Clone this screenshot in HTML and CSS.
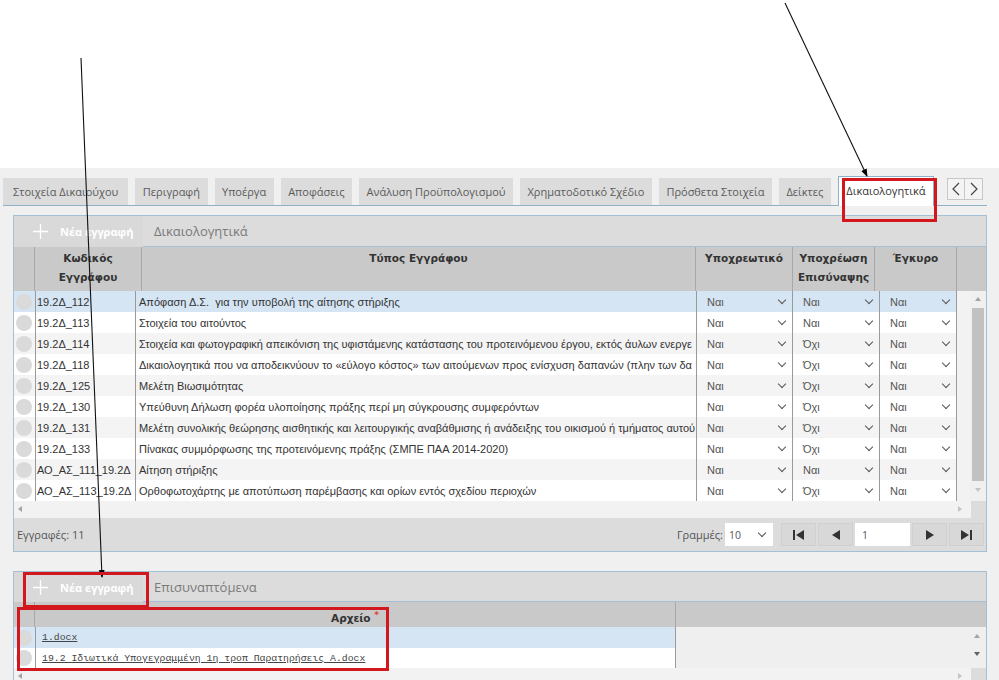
FILE: index.html
```html
<!DOCTYPE html>
<html lang="el">
<head>
<meta charset="utf-8">
<title>Δικαιολογητικά</title>
<link rel="stylesheet" href="styles.css">
</head>
<body>
<div class="top-space"></div>
<div class="app">
  <div class="tabs">
    <div class="tab">Στοιχεία Δικαιούχου</div>
    <div class="tab">Περιγραφή</div>
    <div class="tab">Υποέργα</div>
    <div class="tab">Αποφάσεις</div>
    <div class="tab">Ανάλυση Προϋπολογισμού</div>
    <div class="tab">Χρηματοδοτικό Σχέδιο</div>
    <div class="tab">Πρόσθετα Στοιχεία</div>
    <div class="tab">Δείκτες</div>
    <div class="tab active">Δικαιολογητικά</div>
    <div class="tab-nav">
      <span class="nav-btn"><svg width="8" height="14" viewBox="0 0 8 14"><path d="M7 1 L1 7 L7 13" fill="none" stroke="#444" stroke-width="1.2"/></svg></span>
      <span class="nav-btn"><svg width="8" height="14" viewBox="0 0 8 14"><path d="M1 1 L7 7 L1 13" fill="none" stroke="#444" stroke-width="1.2"/></svg></span>
    </div>
  </div>

  <div class="panel panel-docs">
    <div class="toolbar">
      <div class="new-btn"><svg class="plus" width="15" height="15" viewBox="0 0 15 15"><path d="M7.5 0 V15 M0 7.5 H15" stroke="#fff" stroke-width="1.3"/></svg><span>Νέα εγγραφή</span></div>
      <div class="tb-title">Δικαιολογητικά</div>
    </div>
    <div class="ghead">
      <div class="hc"></div>
      <div class="hc">Κωδικός<br>Εγγράφου</div>
      <div class="hc">Τύπος Εγγράφου</div>
      <div class="hc">Υποχρεωτικό</div>
      <div class="hc">Υποχρέωση<br>Επισύναψης</div>
      <div class="hc">Έγκυρο</div>
      <div class="hc last"></div>
    </div>
    <div class="gbody">
      <div class="rows">
        <div class="row sel"><div class="c chk"><span class="radio"></span></div><div class="c code">19.2Δ_112</div><div class="c type">Απόφαση Δ.Σ.&nbsp; για την υποβολή της αίτησης στήριξης</div><div class="c dd">Ναι<i></i></div><div class="c dd">Ναι<i></i></div><div class="c dd">Ναι<i></i></div></div>
        <div class="row"><div class="c chk"><span class="radio"></span></div><div class="c code">19.2Δ_113</div><div class="c type">Στοιχεία του αιτούντος</div><div class="c dd">Ναι<i></i></div><div class="c dd">Ναι<i></i></div><div class="c dd">Ναι<i></i></div></div>
        <div class="row alt"><div class="c chk"><span class="radio"></span></div><div class="c code">19.2Δ_114</div><div class="c type">Στοιχεία και φωτογραφική απεικόνιση της υφιστάμενης κατάστασης του προτεινόμενου έργου, εκτός άυλων ενεργε</div><div class="c dd">Ναι<i></i></div><div class="c dd">Όχι<i></i></div><div class="c dd">Ναι<i></i></div></div>
        <div class="row"><div class="c chk"><span class="radio"></span></div><div class="c code">19.2Δ_118</div><div class="c type">Δικαιολογητικά που να αποδεικνύουν το «εύλογο κόστος» των αιτούμενων προς ενίσχυση δαπανών (πλην των δα</div><div class="c dd">Ναι<i></i></div><div class="c dd">Όχι<i></i></div><div class="c dd">Ναι<i></i></div></div>
        <div class="row alt"><div class="c chk"><span class="radio"></span></div><div class="c code">19.2Δ_125</div><div class="c type">Μελέτη Βιωσιμότητας</div><div class="c dd">Ναι<i></i></div><div class="c dd">Όχι<i></i></div><div class="c dd">Ναι<i></i></div></div>
        <div class="row"><div class="c chk"><span class="radio"></span></div><div class="c code">19.2Δ_130</div><div class="c type">Υπεύθυνη Δήλωση φορέα υλοποίησης πράξης περί μη σύγκρουσης συμφερόντων</div><div class="c dd">Ναι<i></i></div><div class="c dd">Όχι<i></i></div><div class="c dd">Ναι<i></i></div></div>
        <div class="row alt"><div class="c chk"><span class="radio"></span></div><div class="c code">19.2Δ_131</div><div class="c type">Μελέτη συνολικής θεώρησης αισθητικής και λειτουργικής αναβάθμισης ή ανάδειξης του οικισμού ή τμήματος αυτού</div><div class="c dd">Ναι<i></i></div><div class="c dd">Όχι<i></i></div><div class="c dd">Ναι<i></i></div></div>
        <div class="row"><div class="c chk"><span class="radio"></span></div><div class="c code">19.2Δ_133</div><div class="c type">Πίνακας συμμόρφωσης της προτεινόμενης πράξης (ΣΜΠΕ ΠΑΑ 2014-2020)</div><div class="c dd">Ναι<i></i></div><div class="c dd">Όχι<i></i></div><div class="c dd">Ναι<i></i></div></div>
        <div class="row alt"><div class="c chk"><span class="radio"></span></div><div class="c code">ΑΟ_ΑΣ_111_19.2Δ</div><div class="c type">Αίτηση στήριξης</div><div class="c dd">Ναι<i></i></div><div class="c dd">Ναι<i></i></div><div class="c dd">Ναι<i></i></div></div>
        <div class="row"><div class="c chk"><span class="radio"></span></div><div class="c code">ΑΟ_ΑΣ_113_19.2Δ</div><div class="c type">Ορθοφωτοχάρτης με αποτύπωση παρέμβασης και ορίων εντός σχεδίου περιοχών</div><div class="c dd">Ναι<i></i></div><div class="c dd">Όχι<i></i></div><div class="c dd">Ναι<i></i></div></div>
      </div>
      <div class="gutter"></div>
      <div class="vscroll">
        <span class="arr up"></span>
        <span class="thumb"></span>
        <span class="arr down"></span>
      </div>
    </div>
    <div class="hscroll">
      <span class="harr left"></span>
      <span class="harr right"></span>
      <span class="corner"></span>
    </div>
    <div class="footer">
      <div class="count">Εγγραφές: 11</div>
      <div class="pager">
        <span class="lbl">Γραμμές:</span>
        <span class="select">10<i></i></span>
        <span class="pbtn"><svg width="11" height="10" viewBox="0 0 11 10"><rect x="0" y="0" width="2" height="10" fill="#333"/><path d="M11 0 L3 5 L11 10 Z" fill="#333"/></svg></span>
        <span class="pbtn"><svg width="8" height="10" viewBox="0 0 8 10"><path d="M8 0 L0 5 L8 10 Z" fill="#333"/></svg></span>
        <span class="pinput">1</span>
        <span class="pbtn"><svg width="8" height="10" viewBox="0 0 8 10"><path d="M0 0 L8 5 L0 10 Z" fill="#333"/></svg></span>
        <span class="pbtn"><svg width="11" height="10" viewBox="0 0 11 10"><path d="M0 0 L8 5 L0 10 Z" fill="#333"/><rect x="9" y="0" width="2" height="10" fill="#333"/></svg></span>
      </div>
    </div>
  </div>

  <div class="panel panel-files">
    <div class="toolbar small">
      <div class="new-btn"><svg class="plus" width="15" height="15" viewBox="0 0 15 15"><path d="M7.5 0 V15 M0 7.5 H15" stroke="#fff" stroke-width="1.3"/></svg><span>Νέα εγγραφή</span></div>
      <div class="tb-title">Επισυναπτόμενα</div>
    </div>
    <div class="fhead">
      <div class="hc"></div>
      <div class="hc">Αρχείο <sup class="req">*</sup></div>
      <div class="hc last"></div>
    </div>
    <div class="fbody">
      <div class="frows">
        <div class="frow sel"><div class="c chk"><span class="radio"></span></div><div class="c file">1.docx</div></div>
        <div class="frow"><div class="c chk"><span class="radio"></span></div><div class="c file">19.2 Ιδιωτικά Υπογεγραμμένη 1η τροπ Παρατηρήσεις Α.docx</div></div>
      </div>
      <div class="fempty">
        <span class="arr up"></span>
        <span class="arr down dark"></span>
      </div>
    </div>
    <div class="hscroll small">
      <span class="harr left"></span>
      <span class="harr right"></span>
      <span class="corner"></span>
    </div>
  </div>
</div>

<svg class="annot" width="999" height="680" viewBox="0 0 999 680">
  <defs>
    <marker id="ah" markerWidth="8" markerHeight="8" refX="7" refY="4" orient="auto" markerUnits="userSpaceOnUse">
      <path d="M0 1 L8 4 L0 7 Z" fill="#000"/>
    </marker>
  </defs>
  <line x1="81" y1="58" x2="102" y2="577" stroke="#111" stroke-width="1.1" marker-end="url(#ah)"/>
  <line x1="785" y1="3" x2="867" y2="176" stroke="#111" stroke-width="1.1" marker-end="url(#ah)"/>
</svg>
<div class="mark mark-tab"></div>
<div class="mark mark-btn"></div>
<div class="mark mark-file"></div>
</body>
</html>
```
FILE: styles.css
```css
* { box-sizing: border-box; }
html, body { margin: 0; padding: 0; }
body {
  width: 999px;
  height: 680px;
  overflow: hidden;
  position: relative;
  background: #fff;
  font-family: "Open Sans", "DejaVu Sans", sans-serif;
  color: #333;
}
.top-space { height: 168px; background: #fff; }
.app {
  height: 512px;
  background: #f0f0f0;
  padding-top: 10px;
  overflow: hidden;
}

/* tabs */
.tabs {
  display: flex;
  align-items: flex-end;
  gap: 7px;
  margin-left: 3px;
  width: 984px;
  height: 28px;
  border-bottom: 1px solid #8fb0c6;
}
.tab {
  height: 27px;
  padding: 0 7.5px;
  display: flex;
  align-items: center;
  background: #dcdcdc;
  color: #5a5a5a;
  font-size: 11px;
  white-space: nowrap;
}
.tab:first-child { padding: 0 10px; }
.tab.active {
  height: 30px;
  margin-bottom: -1px;
  background: #fff;
  color: #333;
  border: 1px solid #8fb0c6;
  border-bottom: none;
  align-items: flex-start;
  padding-top: 6px;
}
.tab-nav {
  display: flex;
  margin-left: 6px;
  align-self: flex-start;
}
.nav-btn {
  width: 18px;
  height: 22px;
  display: flex;
  align-items: center;
  justify-content: center;
  background: #f4f4f4;
  border: 1px solid #c8c8c8;
}
.nav-btn + .nav-btn { border-left: none; }

/* panel */
.panel {
  margin-left: 13px;
  width: 974px;
  border: 1px solid #a3c0d4;
  background: #f0f0f0;
}
.panel-docs { margin-top: 9px; }
.panel-files { margin-top: 19px; }

.toolbar {
  height: 31px;
  display: flex;
  align-items: stretch;
  background: #dcdcdc;
}
.toolbar.small { height: 30px; }
.new-btn {
  width: 129px;
  display: flex;
  align-items: center;
  gap: 12px;
  padding-left: 19px;
  background: #d9d9d9;
  color: #fff;
  font-size: 11px;
  font-weight: 700;
}
.tb-title {
  flex: 1;
  display: flex;
  align-items: center;
  padding-left: 11px;
  font-size: 13px;
  color: #7a7a7a;
  border-bottom: 1px solid #a3c0d4;
}

/* grid header */
.ghead {
  display: grid;
  grid-template-columns: 21px 107px 554px 97px 82px 82px 1fr;
  height: 44px;
  background: #c9c9c9;
}
.hc {
  border-right: 1px solid #a8a8a8;
  font-family: "DejaVu Sans", sans-serif;
  font-weight: 700;
  font-size: 10.5px;
  line-height: 19px;
  color: #333;
  text-align: center;
  padding-top: 2px;
}
.hc.last { border-right: none; }

/* grid body */
.gbody {
  display: flex;
  height: 210px;
}
.rows { width: 943px; }
.row {
  display: grid;
  grid-template-columns: 21px 100px 561px 96px 87px 78px;
  height: 21px;
  background: #fff;
}
.row.alt { background: #f4f4f4; }
.row.sel { background: #d5e5f3; }
.c {
  display: flex;
  align-items: center;
  overflow: hidden;
  white-space: nowrap;
  font-family: "Liberation Sans", Arial, sans-serif;
  font-size: 11px;
  color: #333;
}
.c.code { padding-left: 1px; border-left: 1px solid #9a9a9a; }
.c.type { padding-left: 3px; border-left: 1px solid #9a9a9a; }
.c.dd {
  border-left: 1px solid #9a9a9a;
  padding-left: 10px;
  padding-right: 7px;
  justify-content: space-between;
  color: #555;
}
.c.dd i {
  width: 6px;
  height: 6px;
  border-right: 1px solid #555;
  border-bottom: 1px solid #555;
  transform: rotate(45deg);
  margin-top: -3px;
}
.c.dd:last-child { border-right: 1px solid #9a9a9a; }
.radio {
  width: 16px;
  height: 16px;
  border-radius: 50%;
  background: #dadada;
  margin-left: 2px;
}
.gutter { width: 13px; background: #f2f2f2; }
.vscroll {
  width: 15px;
  background: #f0f0f0;
  display: flex;
  flex-direction: column;
  align-items: center;
}
.arr {
  width: 0;
  height: 0;
  border-left: 3px solid transparent;
  border-right: 3px solid transparent;
}
.arr.up { border-bottom: 4px solid #a3a3a3; margin-top: 6px; }
.arr.down { border-top: 4px solid #c4c4c4; margin-top: 7px; }
.arr.down.dark { border-top-color: #606060; }
.thumb {
  width: 12px;
  height: 173px;
  background: #c1c1c1;
  margin-top: 7px;
}

.hscroll {
  height: 17px;
  position: relative;
  background: #f2f2f2;
}
.hscroll.small { height: 12px; }
.harr {
  position: absolute;
  top: 5px;
  width: 0;
  height: 0;
  border-top: 3px solid transparent;
  border-bottom: 3px solid transparent;
}
.harr.left { left: 4px; border-right: 4px solid #a3a3a3; }
.harr.right { right: 24px; border-left: 4px solid #c4c4c4; }
.corner {
  position: absolute;
  right: 0;
  top: 0;
  width: 15px;
  height: 100%;
  background: #dcdcdc;
}

/* footer */
.footer {
  height: 33px;
  background: #dcdcdc;
  display: flex;
  align-items: center;
  justify-content: space-between;
  padding: 0 2px 0 3px;
}
.count { font-size: 11px; color: #555; }
.pager {
  display: flex;
  align-items: center;
  height: 24px;
  font-size: 11px;
  color: #555;
}
.lbl { margin-right: 2px; }
.select {
  width: 48px;
  height: 23px;
  background: #fff;
  display: flex;
  align-items: center;
  justify-content: space-between;
  padding: 0 8px 0 4px;
  font-size: 10.5px;
  margin-right: 8px;
}
.select i {
  width: 6px;
  height: 6px;
  border-right: 1px solid #555;
  border-bottom: 1px solid #555;
  transform: rotate(45deg);
  margin-top: -3px;
}
.pbtn {
  width: 35px;
  height: 23px;
  display: flex;
  align-items: center;
  justify-content: center;
  background: #d8d8d8;
  border: 1px solid #d0d0d0;
  margin-right: 2px;
}
.pbtn:last-child { margin-right: 0; }
.pinput {
  width: 55px;
  height: 23px;
  background: #fff;
  display: flex;
  align-items: center;
  padding-left: 7px;
  font-size: 10.5px;
  margin-right: 2px;
}

/* files panel */
.fhead {
  display: grid;
  grid-template-columns: 21px 641px 1fr;
  height: 25px;
  background: #c9c9c9;
}
.fhead .hc { line-height: 20px; padding-top: 3px; }
.req { color: #e04040; font-size: 9px; vertical-align: 4px; }
.fbody { display: flex; height: 41px; }
.frows { width: 662px; border-right: 1px solid #9a9a9a; }
.frow {
  display: grid;
  grid-template-columns: 21px 1fr;
  height: 21px;
  background: #fff;
}
.frow + .frow { height: 20px; }
.frow.sel { background: #d5e5f3; }
.c.file {
  border-left: 1px solid #9a9a9a;
  padding-left: 6px;
  font-family: "Liberation Mono", "DejaVu Sans Mono", monospace;
  font-size: 9.8px;
  text-decoration: underline;
  color: #444;
}
.fempty {
  flex: 1;
  background: #efefef;
  display: flex;
  flex-direction: column;
  align-items: flex-end;
  padding-right: 6px;
}
.fempty .arr.up { margin-top: 7px; }
.fempty .arr.down { margin-top: 14px; }

/* annotations */
.annot {
  position: absolute;
  left: 0;
  top: 0;
  pointer-events: none;
}
.mark {
  position: absolute;
  border: 3px solid #d2171e;
  pointer-events: none;
}
.mark-tab { left: 842px; top: 178px; width: 95px; height: 44px; }
.mark-btn { left: 23px; top: 572px; width: 126px; height: 36px; }
.mark-file { left: 17px; top: 607px; width: 372px; height: 64px; }
```
